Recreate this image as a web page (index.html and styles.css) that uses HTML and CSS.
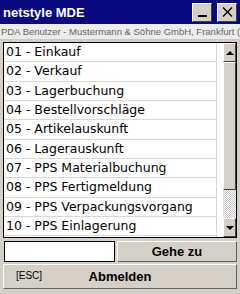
FILE: index.html
```html
<!DOCTYPE html>
<html>
<head>
<meta charset="utf-8">
<link rel="stylesheet" href="styles.css">
</head>
<body>
<div class="window">
  <div class="titlebar">
    <span class="title">netstyle MDE</span>
    <div class="tbtns">
      <div class="tb"><span class="minbar"></span></div>
      <div class="tb"><svg width="11" height="10" viewBox="0 0 11 10"><path d="M1 0.5 L10 9.5 M10 0.5 L1 9.5" stroke="#000" stroke-width="1.3" fill="none"/></svg></div>
    </div>
  </div>
  <div class="subtitle">PDA Benutzer - Mustermann &amp; Söhne GmbH, Frankfurt (Oder)</div>
  <div class="listbox">
    <ul class="items">
      <li>01 - Einkauf</li>
      <li>02 - Verkauf</li>
      <li>03 - Lagerbuchung</li>
      <li>04 - Bestellvorschläge</li>
      <li>05 - Artikelauskunft</li>
      <li>06 - Lagerauskunft</li>
      <li>07 - PPS Materialbuchung</li>
      <li>08 - PPS Fertigmeldung</li>
      <li>09 - PPS Verpackungsvorgang</li>
      <li>10 - PPS Einlagerung</li>
      <li>11 - PPS Auslagerung</li>
    </ul>
    <div class="scrollbar">
      <div class="sbtn"><span class="arrow up"></span></div>
      <div class="thumb"></div>
      <div class="track"></div>
      <div class="sbtn"><span class="arrow down"></span></div>
    </div>
  </div>
  <div class="goto">
    <div class="input"></div>
    <div class="btn gobtn">Gehe zu</div>
  </div>
  <div class="btn logout"><span class="esc">[ESC]</span><span class="lbl">Abmelden</span></div>
</div>
</body>
</html>
```
FILE: styles.css
```css
* { box-sizing: border-box; }
html, body { margin: 0; padding: 0; }
body { width: 240px; height: 294px; overflow: hidden; background: #d4d0c8; font-family: "Liberation Sans", Arial, sans-serif; }
.window { width: 240px; height: 294px; display: flex; flex-direction: column; background: #d4d0c8; }
.titlebar { height: 24px; background: #0a0a80; display: flex; align-items: center; justify-content: space-between; padding: 0 3px 0 3px; }
.title { color: #fff; font-weight: bold; font-size: 13px; }
.tbtns { display: flex; gap: 5px; }
.tb { width: 20px; height: 19px; background: #d4d0c8; border-top: 1px solid #fff; border-left: 1px solid #fff; border-right: 1px solid #404040; border-bottom: 1px solid #404040; display: flex; align-items: center; justify-content: center; position: relative; }
.minbar { position: absolute; left: 5px; bottom: 4px; width: 9px; height: 2px; background: #000; }
.subtitle { height: 16px; background: #ececec; color: #666; font-size: 9.5px; line-height: 16px; white-space: nowrap; overflow: hidden; padding-left: 1px; border-bottom: 1px solid #c8c8c8; }
.listbox { margin: 2px 3px 0 3px; height: 196px; background: #fff; border: 1px solid #000; display: flex; overflow: hidden; }
.items { list-style: none; margin: 0; padding: 0; flex: 1; overflow: hidden; }
.items li { height: 19.33px; line-height: 18px; font-family: "DejaVu Sans", sans-serif; font-size: 12.5px; color: #000; padding-left: 2px; border-bottom: 1px solid #d8d8d8; border-right: 1px solid #d8d8d8; margin-right: 6px; white-space: nowrap; }
.scrollbar { width: 13px; display: flex; flex-direction: column; }
.sbtn { height: 19px; background: #d4d0c8; border-top: 1px solid #fff; border-left: 1px solid #fff; border-right: 1px solid #404040; border-bottom: 1px solid #404040; display: flex; align-items: center; justify-content: center; }
.arrow { width: 0; height: 0; border-left: 4px solid transparent; border-right: 4px solid transparent; }
.arrow.up { border-bottom: 4px solid #000; }
.arrow.down { border-top: 4px solid #000; }
.thumb { height: 128px; background: #d4d0c8; border-top: 1px solid #fff; border-left: 1px solid #fff; border-right: 1px solid #404040; border-bottom: 1px solid #404040; }
.track { flex: 1; background-color: #fff; background-image: repeating-conic-gradient(#c8c8c8 0 25%, #fff 0 50%); background-size: 2px 2px; }
.goto { display: flex; margin: 3px 3px 0 4px; height: 21px; gap: 2px; }
.input { width: 111px; background: #fff; border: 1px solid #000; }
.btn { background: #d4d0c8; border-top: 1px solid #fff; border-left: 1px solid #fff; border-right: 1px solid #606060; border-bottom: 1px solid #606060; font-weight: bold; font-size: 13px; display: flex; align-items: center; justify-content: center; }
.gobtn { flex: 1; }
.logout { margin: 2px 3px 0 3px; height: 25px; position: relative; }
.esc { position: absolute; left: 12px; top: 5px; font-weight: normal; font-size: 10px; }
```
